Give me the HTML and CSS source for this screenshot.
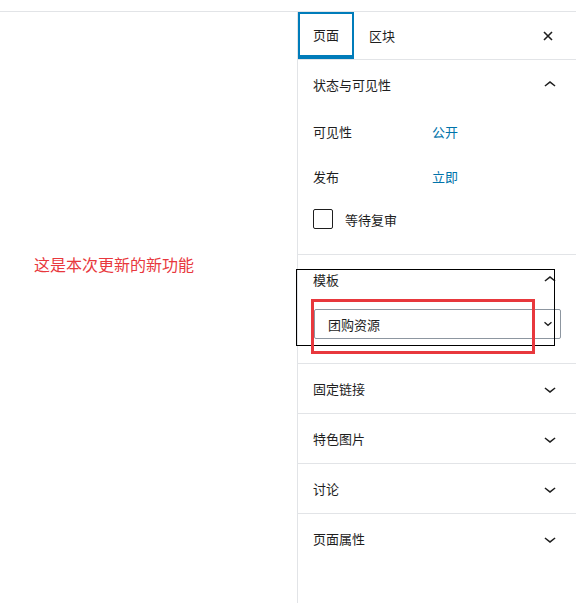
FILE: index.html
```html
<!DOCTYPE html>
<html lang="zh-CN">
<head>
<meta charset="utf-8">
<link rel="stylesheet" href="styles.css">
</head>
<body>
<div class="topbar"></div>
<div class="layout">
  <main class="canvas">
    <p class="note">这是本次更新的新功能</p>
  </main>
  <aside class="sidebar">
    <div class="tabs">
      <button class="tab active">页面</button>
      <button class="tab">区块</button>
      <button class="close" aria-label="关闭">
        <svg width="12" height="12" viewBox="0 0 12 12"><path d="M2 2L10 10M10 2L2 10" stroke="#1e1e1e" stroke-width="1.6" fill="none"/></svg>
      </button>
    </div>

    <section class="panel open">
      <div class="panel-title">
        <span>状态与可见性</span>
        <svg class="chev" width="24" height="24" viewBox="0 0 24 24"><path d="M6.5 12.4L12 8l5.5 4.4-.9 1.2L12 10l-4.6 3.6-1-1.2z"/></svg>
      </div>
      <div class="panel-body status">
        <div class="row"><span class="label">可见性</span><a class="value">公开</a></div>
        <div class="row"><span class="label">发布</span><a class="value">立即</a></div>
        <label class="check"><span class="box"></span><span>等待复审</span></label>
      </div>
    </section>

    <section class="panel open template">
      <div class="panel-title">
        <span>模板</span>
        <svg class="chev" width="24" height="24" viewBox="0 0 24 24"><path d="M6.5 12.4L12 8l5.5 4.4-.9 1.2L12 10l-4.6 3.6-1-1.2z"/></svg>
      </div>
      <div class="panel-body">
        <div class="select">
          <span>团购资源</span>
          <svg width="10" height="6" viewBox="0 0 10 6"><path d="M1.5 1.2L5 4.3 8.5 1.2" stroke="#1e1e1e" stroke-width="1.3" fill="none"/></svg>
        </div>
      </div>
      <div class="mark-black"></div>
      <div class="mark-red"></div>
    </section>

    <section class="panel">
      <div class="panel-title">
        <span>固定链接</span>
        <svg class="chev" width="24" height="24" viewBox="0 0 24 24"><path d="M17.5 11.6L12 16l-5.5-4.4.9-1.2L12 14l4.6-3.6 1 1.2z"/></svg>
      </div>
    </section>
    <section class="panel">
      <div class="panel-title">
        <span>特色图片</span>
        <svg class="chev" width="24" height="24" viewBox="0 0 24 24"><path d="M17.5 11.6L12 16l-5.5-4.4.9-1.2L12 14l4.6-3.6 1 1.2z"/></svg>
      </div>
    </section>
    <section class="panel">
      <div class="panel-title">
        <span>讨论</span>
        <svg class="chev" width="24" height="24" viewBox="0 0 24 24"><path d="M17.5 11.6L12 16l-5.5-4.4.9-1.2L12 14l4.6-3.6 1 1.2z"/></svg>
      </div>
    </section>
    <section class="panel last">
      <div class="panel-title">
        <span>页面属性</span>
        <svg class="chev" width="24" height="24" viewBox="0 0 24 24"><path d="M17.5 11.6L12 16l-5.5-4.4.9-1.2L12 14l4.6-3.6 1 1.2z"/></svg>
      </div>
    </section>
  </aside>
</div>
</body>
</html>
```

FILE: styles.css
```css
* { box-sizing: border-box; }
html, body { margin: 0; padding: 0; background: #fff; }
body {
  font-family: "Noto Sans CJK SC", "Noto Sans", sans-serif;
  font-size: 13px;
  color: #1e1e1e;
  width: 576px;
  height: 603px;
  overflow: hidden;
}
.topbar {
  height: 12px;
  border-bottom: 1px solid #e2e4e7;
}
.layout {
  display: flex;
  height: 591px;
}
.canvas {
  width: 297px;
  flex: none;
}
.note {
  margin: 0;
  padding: 241px 0 0 34px;
  font-size: 16px;
  line-height: 22px;
  color: #e8383d;
}
.sidebar {
  position: relative;
  flex: 1;
  border-left: 1px solid #e2e4e7;
}
.tabs {
  display: flex;
  align-items: stretch;
  height: 48px;
  border-bottom: 1px solid #e2e4e7;
}
.tab {
  font: inherit;
  color: #1e1e1e;
  background: none;
  border: 0;
  padding: 0 14px;
  height: 47px;
  cursor: pointer;
}
.tab.active {
  border: 2px solid #007cba;
  border-bottom-width: 4px;
  width: 56px;
  padding: 0 12px;
}
.tab + .tab { padding-left: 15px; }
.close {
  margin-left: auto;
  margin-right: 16px;
  background: none;
  border: 0;
  width: 24px;
  padding: 0;
  display: flex;
  align-items: center;
  justify-content: center;
}
.panel {
  border-bottom: 1px solid #e2e4e7;
  position: relative;
}
.panel.last { border-bottom: 0; }
.panel-title {
  display: flex;
  align-items: center;
  justify-content: space-between;
  height: 49px;
  padding: 0 14px 0 15px;
}
.chev { fill: #1e1e1e; }
.panel-body { padding: 0 15px 0 15px; }
.status { height: 145px; }
.row {
  display: grid;
  grid-template-columns: 119px 1fr;
  height: 45px;
  align-items: center;
}
.value { color: #0073aa; }
.check {
  display: flex;
  align-items: center;
  gap: 12px;
  height: 40px;
}
.box {
  width: 20px;
  height: 20px;
  border: 1px solid #1e1e1e;
  border-radius: 2px;
}
.template .panel-body { height: 59px; padding-top: 5px; }
.select {
  display: flex;
  align-items: center;
  justify-content: space-between;
  height: 30px;
  margin-left: 1px;
  border: 1px solid #8d96a0;
  border-radius: 2px;
  padding: 0 7px 0 13px;
}
.mark-black {
  position: absolute;
  left: -2px;
  top: 14px;
  width: 259px;
  height: 77px;
  border: 1px solid #000;
  pointer-events: none;
}
.mark-red {
  position: absolute;
  left: 13px;
  top: 44px;
  width: 224px;
  height: 55px;
  border: 3px solid #e8383d;
  pointer-events: none;
}
```
